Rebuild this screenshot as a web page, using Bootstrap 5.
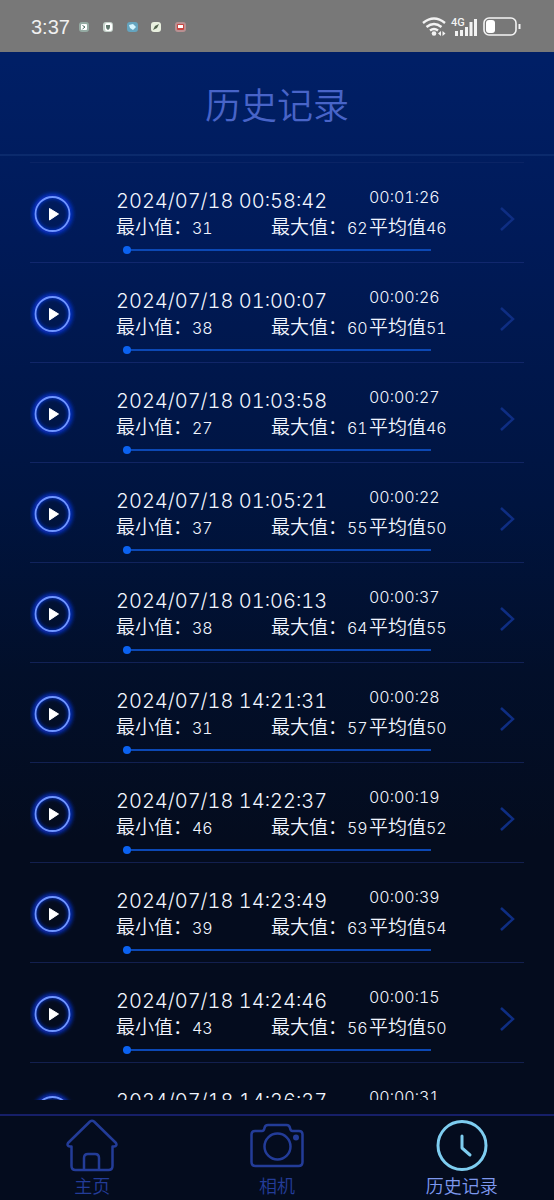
<!DOCTYPE html>
<html lang="zh-CN">
<head>
<meta charset="utf-8">
<meta name="viewport" content="width=device-width, initial-scale=1">
<title>历史记录</title>
<link href="https://cdn.jsdelivr.net/npm/bootstrap@5.3.0/dist/css/bootstrap.min.css" rel="stylesheet">
<style>
  body {
    font-family: Inter, "Noto Sans CJK SC", sans-serif;
    font-weight: 350;
    font-variant-numeric: tabular-nums;
    color: #f2f6ff;
    background: #040c1e;
  }
  .app { background: linear-gradient(#001f66 0, #001f66 5%, #001a58 20%, #00143f 42%, #020f2a 56%, #040c1e 70%, #040c1e 100%); }
  .status-bar { height: 52px; background: #787878; color: #f0f0f0; padding: 2px 32px 0 31px; }
  .clock-text { font-size: 20px; line-height: 24px; font-family: "Liberation Sans", sans-serif; }
  .page-head { height: 104px; border-bottom: 2px solid #0b2a6c; padding-top: 6px; }
  .page-head h1 { font-size: 36px; line-height: 48px; font-weight: 350; color: #4864c8; }
  .records { margin: 6px 30px 14px; border-top: 1px solid #0a2465; }
  .record {
    display: grid;
    grid-template-columns: 86px 155fr 98fr 115fr 40px;
    grid-template-rows: 30px 26px 16px;
    height: 100px;
    padding-top: 22px;
    border-bottom: 1px solid rgba(38, 58, 140, .45);
  }
  .play { grid-area: 1 / 1 / 4 / 2; width: 52px; height: 52px; margin: 3px 0 0 -4px; }
  .date { grid-area: 1 / 2 / 2 / 4; font-size: 20px; line-height: 32px; }
  .length { grid-area: 1 / 4; font-size: 16px; line-height: 24px; }
  .stat { font-size: 19px; line-height: 26px; grid-row: 2; white-space: nowrap; }
  .stat span { font-size: 16px; }
  .track-cell { grid-area: 3 / 2 / 4 / 5; padding: 0 53px 0 7px; display: flex; }
  .next { grid-area: 1 / 5 / 4 / 6; width: 24px; height: 30px; margin: 19px 0 0 11px; }
  .seek { appearance: none; width: 100%; height: 18px; margin: 0; background: transparent; }
  .seek::-webkit-slider-runnable-track { height: 2px; background: #0c48b4; }
  .seek::-webkit-slider-thumb { appearance: none; width: 8px; height: 8px; margin-top: -3px; border-radius: 50%; background: #0b62f0; }
  .tabs { height: 86px; border-top: 2px solid #161f68; color: #233c98; padding-top: 3px; }
  .tabs a { color: inherit; font-size: 18px; line-height: 27px; }
  .tabs a.active { color: #7d98ee; }
  .tabs a.active svg { color: #7ecdf0; }
</style>
</head>
<body>
<div class="app d-flex flex-column vh-100 overflow-hidden">
  <div class="status-bar d-flex align-items-center flex-shrink-0">
    <span class="clock-text">3:37</span>
    <svg class="ms-2" width="112" height="12" viewBox="0 0 112 12" aria-hidden="true">
      <rect x="1" y="1" width="10" height="10" rx="3" fill="#94aaa2"/><rect x="3" y="3" width="6" height="6" rx="1" fill="#fff"/><path d="M4.500 4.500 7 6 4.500 8" fill="none" stroke="#486b60"/>
      <rect x="25" y="1" width="10" height="10" rx="3" fill="#c5d2ca"/><rect x="27" y="2" width="7" height="8" rx="2" fill="#fff"/><path d="M28 4h4v2q0 2-2 3-2-1-2-3z" fill="#61796f"/>
      <rect x="49" y="1" width="11" height="10" rx="3" fill="#64a4bf"/><path d="M51 4l4-1 3 3-3 3-3-2z" fill="#d5f5ff"/>
      <rect x="73" y="1" width="10" height="10" rx="3" fill="#e9f0df"/><path d="M75 9l2-4 4-2-2 4z" fill="#52634d"/>
      <rect x="97" y="1" width="11" height="10" rx="3" fill="#b98f91"/><rect x="99" y="3" width="7" height="6" rx="1" fill="#c94440"/><path d="M100 4h5v3h-5z" fill="#fff"/>
    </svg>
    <svg class="ms-auto" width="100" height="24" viewBox="0 0 100 24" fill="none" stroke="#f3f3f3" aria-label="Wi-Fi, 4G">
      <g stroke-width="2.400"><path d="M1 8q11-9 22 0M4.500 12q7.500-6 15 0M8 15.500q4-3 8 0"/></g>
      <circle cx="12" cy="18.500" r="2.300" fill="#f3f3f3" stroke="none"/>
      <path d="M19 16v5l-3-2.500zM20.500 16v5l3-2.500z" fill="#f3f3f3" stroke="none"/>
      <text x="29" y="11" font-size="11" font-weight="500" font-family="Roboto, sans-serif" fill="#f3f3f3" stroke="none">4G</text>
      <path d="M34.500 21v-5M39.500 21v-6M44.500 21v-9M49 21V7M53.500 21V4" stroke-width="3"/>
      <rect x="62" y="3" width="32" height="17" rx="5" stroke-width="1.600"/>
      <rect x="64" y="5" width="9" height="13" rx="3" fill="#fff" stroke="none"/>
      <path d="M97.500 9v5" stroke-width="2"/>
    </svg>
  </div>
  <header class="page-head d-flex align-items-center justify-content-center flex-shrink-0">
    <h1 class="m-0">历史记录</h1>
  </header>
  <ul class="records list-unstyled flex-grow-1 overflow-hidden" id="records"></ul>
  <nav class="tabs d-flex flex-shrink-0" aria-label="导航">
    <a class="d-flex flex-column align-items-center text-decoration-none w-100" href="#home">
      <svg class="flex-shrink-0" width="54" height="54" viewBox="0 0 54 54" fill="none" stroke="currentColor" stroke-width="2.500" stroke-linejoin="round"><path d="M25 2.500q2-1.500 4 0L51 24q1.500 3-2 3.500h-1.500V47q0 4-4 4h-33q-4 0-4-4V27.500H5q-3.500-.5-2-3.500zM19 51V39q0-4 4-4h7q4 0 4 4v12"/></svg>
      <span>主页</span>
    </a>
    <a class="d-flex flex-column align-items-center text-decoration-none w-100" href="#camera">
      <svg class="flex-shrink-0" width="54" height="54" viewBox="0 0 54 54" fill="none" stroke="currentColor" stroke-width="2.500" stroke-linejoin="round"><path d="M5 12h7q2 0 2.500-3 .5-3 3.500-3h18.500q3 0 3.500 3 .5 3 2.500 3H49q3.500 0 3.500 3.500V43q0 4-4 4h-43q-4 0-4-4V15.500Q1.500 12 5 12z"/><circle cx="27.500" cy="27.500" r="13"/><circle cx="46" cy="18.500" r="3" fill="currentColor" stroke="none"/></svg>
      <span>相机</span>
    </a>
    <a class="active d-flex flex-column align-items-center text-decoration-none w-100" href="#history" aria-current="page">
      <svg class="flex-shrink-0" width="54" height="54" viewBox="0 0 54 54" fill="none" stroke="currentColor" stroke-width="3" stroke-linecap="round" stroke-linejoin="round"><circle cx="27" cy="26.500" r="24"/><path d="M27 17v12l8 7"/></svg>
      <span>历史记录</span>
    </a>
  </nav>
</div>

<svg width="0" height="0" class="position-absolute" aria-hidden="true">
  <defs>
    <filter id="glow" x="-30%" y="-30%" width="160%" height="160%"><feGaussianBlur stdDeviation="2"/></filter>
    <symbol id="play" viewBox="0 0 52 52">
      <circle cx="26.500" cy="26" r="18" fill="none" stroke="#0a3cff" stroke-opacity=".85" stroke-width="4" filter="url(#glow)"/>
      <circle cx="26.500" cy="26" r="17" fill="none" stroke="#6f95ff" stroke-width="1.800"/>
      <path d="M23.500 20.500 32.500 26l-9 6z" fill="#fff" stroke="#fff" stroke-linejoin="round"/>
    </symbol>
    <symbol id="next" viewBox="0 0 24 30"><path d="M6 4l12 11L6 26" fill="none" stroke="#0f2e83" stroke-width="2.500"/></symbol>
  </defs>
</svg>

<script>
  const records = [
    ["2024/07/18 00:58:42", "00:01:26", 31, 62, 46],
    ["2024/07/18 01:00:07", "00:00:26", 38, 60, 51],
    ["2024/07/18 01:03:58", "00:00:27", 27, 61, 46],
    ["2024/07/18 01:05:21", "00:00:22", 37, 55, 50],
    ["2024/07/18 01:06:13", "00:00:37", 38, 64, 55],
    ["2024/07/18 14:21:31", "00:00:28", 31, 57, 50],
    ["2024/07/18 14:22:37", "00:00:19", 46, 59, 52],
    ["2024/07/18 14:23:49", "00:00:39", 39, 63, 54],
    ["2024/07/18 14:24:46", "00:00:15", 43, 56, 50],
    ["2024/07/18 14:26:27", "00:00:31"]
  ];
  const stats = (min, max, avg) => min === undefined ? "" : `
      <div class="stat" style="grid-column:2">最小值：<span>${min}</span></div>
      <div class="stat" style="grid-column:3">最大值：<span>${max}</span></div>
      <div class="stat" style="grid-column:4">平均值<span>${avg}</span></div>`;
  document.getElementById("records").innerHTML = records.map(([date, length, min, max, avg]) => `
    <li class="record">
      <button type="button" class="play btn p-0 border-0" aria-label="播放"><svg class="d-block" width="52" height="52"><use href="#play"/></svg></button>
      <time class="date">${date}</time>
      <time class="length">${length}</time>${stats(min, max, avg)}
      <div class="track-cell"><input class="seek" type="range" min="0" max="100" value="0" aria-label="播放进度"></div>
      <button type="button" class="next btn p-0 border-0" aria-label="查看详情"><svg class="d-block" width="24" height="30"><use href="#next"/></svg></button>
    </li>`).join("");
</script>
<script src="https://cdn.jsdelivr.net/npm/bootstrap@5.3.0/dist/js/bootstrap.bundle.min.js"></script>
</body>
</html>
